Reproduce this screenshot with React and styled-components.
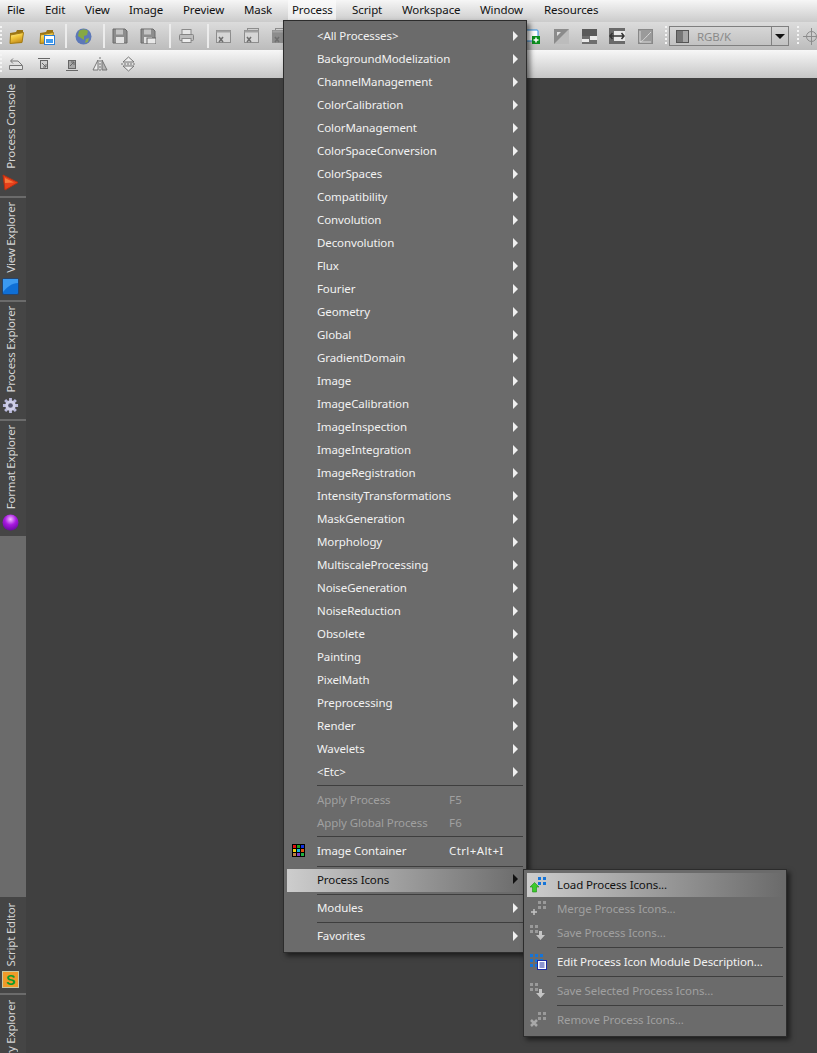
import styled, { createGlobalStyle } from 'styled-components';

const GlobalStyle = createGlobalStyle`
  html, body { margin: 0; height: 100%; overflow: hidden; background: #404040; }
  body { font-family: "Noto Sans", Tahoma, sans-serif; font-size: 11.5px; letter-spacing: -0.1px; }
`;

const Page = styled.div`
  position: relative;
  width: 817px;
  height: 1053px;
  overflow: hidden;
  display: flex;
  flex-direction: column;
`;

const MenuBar = styled.div`
  height: 22px;
  flex: none;
  display: flex;
  align-items: flex-start;
  padding-left: 1px;
  background: linear-gradient(#f6f6f6, #cbcbcb);
`;

const MenuTitle = styled.div`
  width: ${p => p.$width}px;
  box-sizing: border-box;
  height: 20px;
  line-height: 20px;
  padding-left: ${p => (p.$active ? 4 : 6)}px;
  margin-right: ${p => (p.$active ? 10 : 0)}px;
  color: #111;
  background: ${p => (p.$active ? 'linear-gradient(#fafafa, #ececec)' : 'transparent')};
`;

const ToolRow = styled.div`
  height: 28px;
  flex: none;
  display: flex;
  align-items: center;
  background: ${p => (p.$light
    ? 'linear-gradient(#f7f7f7, #c6c6c6)'
    : 'linear-gradient(#dcdcdc, #bcbcbc)')};
`;

const Grip = styled.span`
  width: 2px;
  height: 20px;
  flex: none;
  margin: ${p => p.$margin || '0 4px 0 0'};
  background: repeating-linear-gradient(#f4f4f4 0 2px, transparent 2px 4px);
`;

const ToolDivider = styled.span`
  width: 2px;
  height: 24px;
  flex: none;
  margin: 0 ${p => p.$right ?? 5}px 0 ${p => p.$left ?? 11}px;
  background: #ececec;
`;

const ToolButton = styled.span`
  width: 20px;
  height: 20px;
  flex: none;
  display: flex;
  align-items: center;
  justify-content: center;
  margin-right: ${p => p.$gap ?? 8}px;
`;

const ToolSpacer = styled.span`
  flex: 1;
`;

const Combo = styled.div`
  width: 118px;
  height: 18px;
  flex: none;
  display: flex;
  align-items: center;
  border: 1px solid #7f7f7f;
  color: #8a8a8a;
`;

const ComboSwatch = styled.span`
  width: 11px;
  height: 11px;
  margin: 0 8px 0 6px;
  border: 1px solid #555;
  background: linear-gradient(90deg, #777 50%, #a8a8a8 50%);
`;

const ComboLabel = styled.span`
  flex: 1;
`;

const ComboArrow = styled.span`
  width: 16px;
  height: 100%;
  display: flex;
  align-items: center;
  justify-content: center;
  border-left: 1px solid #7f7f7f;
  &::after {
    content: '';
    border-top: 5px solid #111;
    border-left: 5px solid transparent;
    border-right: 5px solid transparent;
  }
`;

const Body = styled.div`
  flex: 1;
  min-height: 0;
  display: flex;
  background: #404040;
`;

const SideBar = styled.div`
  width: 26px;
  flex: none;
  display: flex;
  flex-direction: column;
  background: #6b6b6b;
`;

const SideGroup = styled.div`
  display: flex;
  flex-direction: column;
  overflow: hidden;
  height: ${p => (p.$height ? `${p.$height}px` : 'auto')};
`;

const SideFill = styled.div`
  flex: 1;
`;

const SideTab = styled.div`
  height: ${p => p.$height}px;
  flex: none;
  box-sizing: border-box;
  display: flex;
  flex-direction: column-reverse;
  justify-content: ${p => (p.$top ? 'flex-end' : 'flex-start')};
  align-items: flex-start;
  padding: ${p => (p.$top ? '5px 0 0 2px' : '0 0 5px 2px')};
  margin-bottom: 2px;
  background: #454545;
`;

const SideLabel = styled.span`
  writing-mode: vertical-rl;
  transform: rotate(180deg);
  white-space: nowrap;
  color: #d4d4d4;
  line-height: 14px;
  letter-spacing: -0.2px;
  margin: 0 0 5px 2px;
`;

const PopupMenu = styled.div`
  position: absolute;
  left: ${p => p.$left}px;
  top: ${p => p.$top}px;
  width: ${p => p.$width}px;
  box-sizing: border-box;
  padding: 3px;
  background: #6b6b6b;
  border: 1px solid #2c2c2c;
  box-shadow: 3px 3px 5px rgba(0, 0, 0, 0.55);
`;

const Item = styled.div`
  height: ${p => p.$height || 23}px;
  box-sizing: border-box;
  padding-bottom: ${p => p.$lift || 0}px;
  display: flex;
  align-items: center;
  position: relative;
  color: ${p => (p.$hot ? '#111' : p.$off ? '#a0a0a0' : '#f2f2f2')};
  background: ${p => (p.$hot ? 'linear-gradient(90deg, #cdcdcd, #6b6b6b)' : 'transparent')};
`;

const ItemIcon = styled.span`
  width: 30px;
  flex: none;
  display: flex;
  justify-content: center;
  padding-right: 8px;
  box-sizing: border-box;
`;

const ItemText = styled.span`
  flex: none;
  width: ${p => p.$width || 132}px;
  white-space: nowrap;
`;

const Shortcut = styled.span`
  white-space: nowrap;
  letter-spacing: 0.4px;
`;

const SubArrow = styled.span`
  position: absolute;
  right: 5px;
  top: 50%;
  margin-top: ${p => -5 - (p.$lift || 0) / 2}px;
  border-left: 5px solid ${p => (p.$hot ? '#111' : '#f0f0f0')};
  border-top: 5px solid transparent;
  border-bottom: 5px solid transparent;
`;

const Separator = styled.div`
  height: 1px;
  margin: ${p => p.$space}px 0 ${p => p.$after}px 30px;
  background: #3e3e3e;
`;

const titlesBefore = [
  ['File', 38], ['Edit', 40], ['View', 44], ['Image', 54], ['Preview', 61], ['Mask', 50],
];
const titlesAfter = [
  ['Script', 50], ['Workspace', 78], ['Window', 64], ['Resources', 70],
];

const processGroups = [
  '<All Processes>', 'BackgroundModelization', 'ChannelManagement', 'ColorCalibration',
  'ColorManagement', 'ColorSpaceConversion', 'ColorSpaces', 'Compatibility', 'Convolution',
  'Deconvolution', 'Flux', 'Fourier', 'Geometry', 'Global', 'GradientDomain', 'Image',
  'ImageCalibration', 'ImageInspection', 'ImageIntegration', 'ImageRegistration',
  'IntensityTransformations', 'MaskGeneration', 'Morphology', 'MultiscaleProcessing',
  'NoiseGeneration', 'NoiseReduction', 'Obsolete', 'Painting', 'PixelMath', 'Preprocessing',
  'Render', 'Wavelets', '<Etc>',
];

function Folder({ badge, id }) {
  return (
    <svg width="17" height="17" viewBox="0 0 17 17">
      <defs>
        <linearGradient id={id} x1="0" y1="0" x2="0.400" y2="1">
          <stop offset="0" stopColor="#fff0a8" />
          <stop offset="0.500" stopColor="#f2c83c" />
          <stop offset="1" stopColor="#c8901c" />
        </linearGradient>
      </defs>
      <path d="M2 5 L2 15 L13 15 L15 7 L15 2 L9 2 L8 4 Z" fill="#9a7414" />
      <path d="M2.500 7 L15.500 4.500 L14 14.500 L2 15.500 Z" fill={`url(#${id})`} stroke="#a37c14" />
      {badge && <rect x="6.500" y="7.500" width="10" height="9" fill="#fff" stroke="#2a7fd8" />}
      {badge && <rect x="8" y="11" width="7" height="4" fill="#3f9cf0" />}
    </svg>
  );
}

function Globe() {
  return (
    <svg width="17" height="17" viewBox="0 0 17 17">
      <circle cx="8.500" cy="8.500" r="8" fill="#5c78b8" />
      <path d="M4 3 C7 1 11 1 13 3 L12 7 L9 8 L9 12 L6 10 L3 8 Z" fill="#86a844" />
      <path d="M11 11 L14 10 L13 14 L10 15 Z" fill="#8cab4a" />
    </svg>
  );
}

function Disk({ close }) {
  return (
    <svg width="16" height="16" viewBox="0 0 16 16">
      <path d="M1 1 H13 L15 3 V15 H1 Z" fill="#8d8d8d" stroke="#6a6a6a" />
      <rect x="4" y="1.500" width="7" height="5" fill="#c4c4c4" />
      <rect x="4" y="9" width="8" height="6" fill="#e2e2e2" />
      {close && <rect x="7" y="10" width="9" height="6" fill="#e8e8e8" stroke="#666" />}
    </svg>
  );
}

function Printer() {
  return (
    <svg width="17" height="16" viewBox="0 0 17 16">
      <rect x="4" y="1.500" width="9" height="5" fill="#e6e6e6" stroke="#8a8a8a" />
      <rect x="1.500" y="6.500" width="14" height="6" rx="1" fill="#bdbdbd" stroke="#858585" />
      <rect x="4" y="10.500" width="9" height="4" fill="#eee" stroke="#8a8a8a" />
    </svg>
  );
}

function WindowClose({ dark, stacked }) {
  return (
    <svg width="16" height="16" viewBox="0 0 16 16">
      {stacked && <rect x="3.500" y="0.500" width="11" height="10" fill="#cfcfcf" stroke="#8d8d8d" />}
      <rect x="0.500" y="2.500" width="14" height="12" fill={dark ? '#8c8c8c' : '#d6d6d6'} stroke="#8d8d8d" />
      <rect x="0.500" y="2.500" width="14" height="2" fill="#a2a2a2" />
      <path d="M3 9 L7 14 M7 9 L3 14" stroke="#6f6f6f" strokeWidth="1.600" />
    </svg>
  );
}

function RotateLeft() {
  return (
    <svg width="14" height="12" viewBox="0 0 14 12" fill="none" stroke="#777">
      <path d="M0.500 7.500 H13.500 V11.500 H0.500 Z" fill="#e4e4e4" />
      <path d="M2 3 H9 L13 7" />
      <path d="M4 0.500 L1.500 3 L4 5.500" />
    </svg>
  );
}

function ArrowBox({ flip }) {
  return (
    <svg width="12" height="13" viewBox="0 0 12 13" fill="none" stroke="#666">
      <rect x="2.500" y="2.500" width="7" height="8" fill={flip ? '#a8a8a8' : '#d0d0d0'} />
      <path d={flip ? 'M0 12.500 H12 M4 8 L8 4 M5 4 H8 V7' : 'M0 0.500 H12 M4 5 L8 9 M5 9 H8 V6'} />
    </svg>
  );
}

function MirrorH() {
  return (
    <svg width="16" height="15" viewBox="0 0 16 15" fill="none" stroke="#757575">
      <path d="M8 0 V15" strokeDasharray="2 1" />
      <path d="M6 3 V13 H1 Z" fill="#eee" />
      <path d="M10 3 V13 H15 Z" fill="#b4b4b4" />
    </svg>
  );
}

function MirrorV() {
  return (
    <svg width="15" height="16" viewBox="0 0 15 16" fill="none" stroke="#757575">
      <path d="M0 8 H15" strokeDasharray="2 1" />
      <path d="M2 6 H13 L7.500 1 Z" fill="#eee" />
      <path d="M2 10 H13 L7.500 15 Z" fill="#eee" />
    </svg>
  );
}

function PlusFile() {
  return (
    <svg width="16" height="16" viewBox="0 0 16 16">
      <rect x="1" y="2" width="12" height="11" rx="1" fill="#fff" stroke="#2a8ce0" />
      <rect x="7" y="8" width="8" height="8" fill="#0b8f1e" />
      <path d="M11 9.500 V14.500 M8.500 12 H13.500" stroke="#fff" strokeWidth="1.500" />
    </svg>
  );
}

function HalfSquare() {
  return (
    <svg width="15" height="15" viewBox="0 0 15 15">
      <rect width="15" height="15" fill="#8b8b8b" />
      <path d="M15 0 V15 H0 Z" fill="#bcbcbc" />
      <path d="M3 3 H7 L3 7 Z" fill="#e0e0e0" />
    </svg>
  );
}

function SplitSquare() {
  return (
    <svg width="15" height="15" viewBox="0 0 15 15">
      <rect width="15" height="7" fill="#5a5a5a" />
      <rect y="7" width="15" height="8" fill="#6e6e6e" />
      <rect x="8" y="7" width="7" height="4" fill="#eaeaea" />
      <rect y="10" width="7" height="3" fill="#eaeaea" />
    </svg>
  );
}

function FitWidth() {
  return (
    <svg width="16" height="16" viewBox="0 0 16 16">
      <rect width="16" height="16" fill="#6a6a6a" />
      <rect x="5" y="3" width="11" height="10" fill="#e8e8e8" />
      <path d="M1 8 H15 M3.500 5 L1 8 L3.500 11 M12.500 5 L15 8 L12.500 11" stroke="#333" strokeWidth="1.500" fill="none" />
    </svg>
  );
}

function Curve() {
  return (
    <svg width="15" height="15" viewBox="0 0 15 15">
      <rect x="0.500" y="0.500" width="14" height="14" fill="#9a9a9a" stroke="#888" />
      <path d="M2 13 C5 12 8 8 13 3 M2 2 V13 H13" stroke="#d8d8d8" fill="none" />
    </svg>
  );
}

function Crosshair() {
  return (
    <svg width="17" height="17" viewBox="0 0 17 17" fill="none" stroke="#8c8c8c">
      <circle cx="8.500" cy="8.500" r="5" />
      <path d="M8.500 0 V17 M0 8.500 H17" />
    </svg>
  );
}

function Triangle() {
  return (
    <svg width="17" height="17" viewBox="0 0 17 17">
      <path d="M1 1 L16 8.500 L3 16 Z" fill="#e8401c" stroke="#b8300f" />
      <path d="M3 4 L12 8.500 L3 9 Z" fill="#f77a3c" />
    </svg>
  );
}

function BlueSquare() {
  return (
    <svg width="17" height="17" viewBox="0 0 17 17">
      <rect x="0.500" y="0.500" width="16" height="16" rx="1.500" fill="#0f6fd6" stroke="#26456e" />
      <path d="M1 1 H16 V5 C10 5 5 9 1 14 Z" fill="#3b9af0" />
    </svg>
  );
}

function Gear() {
  return (
    <svg width="17" height="17" viewBox="0 0 18 18">
      <g stroke="#b9b9dc" strokeWidth="3">
        <path d="M9 1 V17 M1 9 H17 M3.300 3.300 L14.700 14.700 M14.700 3.300 L3.300 14.700" />
      </g>
      <circle cx="9" cy="9" r="5.500" fill="#cfcfe8" />
      <circle cx="9" cy="9" r="2.500" fill="#55556e" />
    </svg>
  );
}

function PurpleBall() {
  return (
    <svg width="17" height="17" viewBox="0 0 17 17">
      <defs>
        <radialGradient id="ball" cx="50%" cy="30%" r="70%">
          <stop offset="0" stopColor="#f0b8ff" />
          <stop offset="0.5" stopColor="#a818e0" />
          <stop offset="1" stopColor="#6a0aa0" />
        </radialGradient>
      </defs>
      <circle cx="8.500" cy="8.500" r="8" fill="url(#ball)" />
    </svg>
  );
}

const ScriptBadge = styled.span`
  width: 17px;
  height: 17px;
  display: flex;
  align-items: center;
  justify-content: center;
  background: #f09a28;
  border: 1px solid #c8c8a0;
  box-sizing: border-box;
  color: #0b9a2c;
  font: bold 14px "Liberation Sans", sans-serif;
`;

function ColorGrid() {
  const colors = ['#e01010', '#20a020', '#1030e0', '#e8d010', '#10b8e0', '#e05010', '#c08040', '#8040c0', '#20b040'];
  return (
    <svg width="13" height="13" viewBox="0 0 13 13">
      <rect width="13" height="13" fill="#000" />
      {colors.map((c, i) => (
        <rect key={c} x={(i % 3) * 4 + 1} y={Math.floor(i / 3) * 4 + 1} width="3" height="3" fill={c} />
      ))}
    </svg>
  );
}

function IconDots({ color, x, y, cols = 2, rows = 2 }) {
  const dots = [];
  for (let r = 0; r < rows; r++) {
    for (let c = 0; c < cols; c++) {
      dots.push(<rect key={`${r}-${c}`} x={x + c * 5} y={y + r * 5} width="3" height="3" fill={color} />);
    }
  }
  return <>{dots}</>;
}

function LoadIcon() {
  return (
    <svg width="17" height="17" viewBox="0 0 17 17">
      <IconDots color="#1574d8" x={8} y={1} />
      <path d="M4.500 6.500 L9 11 H6.500 V16 H2.500 V11 H0 Z" fill="#3ecb2c" stroke="#1c8a18" strokeWidth="0.600" />
    </svg>
  );
}

function MergeIcon() {
  return (
    <svg width="17" height="17" viewBox="0 0 17 17">
      <IconDots color="#9a9a9a" x={8} y={1} />
      <path d="M4 9 V15 M1 12 H7" stroke="#c4c4c4" strokeWidth="1.500" />
    </svg>
  );
}

function SaveIcon() {
  return (
    <svg width="17" height="17" viewBox="0 0 17 17">
      <IconDots color="#9a9a9a" x={0} y={1} />
      <path d="M9 7 H12 V11 H15 L10.500 16 L6 11 H9 Z" fill="#c4c4c4" />
    </svg>
  );
}

function EditIcon() {
  return (
    <svg width="17" height="17" viewBox="0 0 17 17">
      <IconDots color="#1574d8" x={0} y={1} cols={3} rows={3} />
      <rect x="7.500" y="7.500" width="9" height="9" fill="#fff" stroke="#1a2aa0" />
      <path d="M9.500 10 H14.500 M9.500 12 H14.500 M9.500 14 H14.500" stroke="#1a2aa0" />
    </svg>
  );
}

function RemoveIcon() {
  return (
    <svg width="17" height="17" viewBox="0 0 17 17">
      <IconDots color="#9a9a9a" x={8} y={1} />
      <path d="M1 9 L7 15 M7 9 L1 15" stroke="#a8a8a8" strokeWidth="2.500" />
    </svg>
  );
}

export default function App() {
  return (
    <Page>
      <GlobalStyle />
      <MenuBar>
        {titlesBefore.map(([name, width]) => (
          <MenuTitle key={name} $width={width}>{name}</MenuTitle>
        ))}
        <MenuTitle $active $width={48}>Process</MenuTitle>
        {titlesAfter.map(([name, width]) => (
          <MenuTitle key={name} $width={width}>{name}</MenuTitle>
        ))}
      </MenuBar>

      <ToolRow>
        <Grip />
        <ToolButton $gap={10}><Folder id="folderA" /></ToolButton>
        <ToolButton $gap={0}><Folder id="folderB" badge /></ToolButton>
        <ToolDivider $left={9} $right={6} />
        <ToolButton $gap={0}><Globe /></ToolButton>
        <ToolDivider $left={10} />
        <ToolButton><Disk /></ToolButton>
        <ToolButton $gap={0}><Disk close /></ToolButton>
        <ToolDivider />
        <ToolButton $gap={0}><Printer /></ToolButton>
        <ToolDivider />
        <ToolButton><WindowClose /></ToolButton>
        <ToolButton><WindowClose stacked /></ToolButton>
        <ToolButton><WindowClose dark stacked /></ToolButton>
        <ToolSpacer />
        <ToolButton><PlusFile /></ToolButton>
        <ToolButton><HalfSquare /></ToolButton>
        <ToolButton><SplitSquare /></ToolButton>
        <ToolButton><FitWidth /></ToolButton>
        <ToolButton $gap={0}><Curve /></ToolButton>
        <Grip $margin="0 2px 0 10px" />
        <Combo>
          <ComboSwatch />
          <ComboLabel>RGB/K</ComboLabel>
          <ComboArrow />
        </Combo>
        <Grip $margin="0 2px 0 8px" />
        <ToolButton $gap={-4}><Crosshair /></ToolButton>
      </ToolRow>

      <ToolRow $light>
        <Grip />
        <ToolButton><RotateLeft /></ToolButton>
        <ToolButton><ArrowBox /></ToolButton>
        <ToolButton><ArrowBox flip /></ToolButton>
        <ToolButton><MirrorH /></ToolButton>
        <ToolButton><MirrorV /></ToolButton>
      </ToolRow>

      <Body>
        <SideBar>
          <SideGroup>
            <SideTab $height={118}><Triangle /><SideLabel>Process Console</SideLabel></SideTab>
            <SideTab $height={102}><BlueSquare /><SideLabel>View Explorer</SideLabel></SideTab>
            <SideTab $height={117}><Gear /><SideLabel>Process Explorer</SideLabel></SideTab>
            <SideTab $height={115}><PurpleBall /><SideLabel>Format Explorer</SideLabel></SideTab>
          </SideGroup>
          <SideFill />
          <SideGroup $height={156}>
            <SideTab $height={96}><ScriptBadge>S</ScriptBadge><SideLabel>Script Editor</SideLabel></SideTab>
            <SideTab $height={130} $top><SideLabel>History Explorer</SideLabel></SideTab>
          </SideGroup>
        </SideBar>
      </Body>

      <PopupMenu $left={283} $top={20} $width={244}>
        {processGroups.map(name => (
          <Item key={name}>
            <ItemIcon />
            <ItemText>{name}</ItemText>
            <SubArrow />
          </Item>
        ))}
        <Separator $space={2} $after={3} />
        <Item $off $lift={2}><ItemIcon /><ItemText>Apply Process</ItemText><Shortcut>F5</Shortcut></Item>
        <Item $off $lift={2}><ItemIcon /><ItemText>Apply Global Process</ItemText><Shortcut>F6</Shortcut></Item>
        <Separator $space={1} $after={1} />
        <Item $height={27} $lift={2}><ItemIcon><ColorGrid /></ItemIcon><ItemText>Image Container</ItemText><Shortcut>Ctrl+Alt+I</Shortcut></Item>
        <Separator $space={1} $after={2} />
        <Item $hot $lift={2}><ItemIcon /><ItemText>Process Icons</ItemText><SubArrow $hot $lift={4} /></Item>
        <Separator $space={2} $after={3} />
        <Item $lift={4}><ItemIcon /><ItemText>Modules</ItemText><SubArrow $lift={4} /></Item>
        <Separator $space={1} $after={3} />
        <Item $lift={4}><ItemIcon /><ItemText>Favorites</ItemText><SubArrow $lift={4} /></Item>
      </PopupMenu>

      <PopupMenu $left={523} $top={869} $width={264}>
        <Item $hot $height={24} $lift={2}><ItemIcon><LoadIcon /></ItemIcon><ItemText $width={220}>Load Process Icons...</ItemText></Item>
        <Item $off $height={24} $lift={2}><ItemIcon><MergeIcon /></ItemIcon><ItemText $width={220}>Merge Process Icons...</ItemText></Item>
        <Item $off $height={24} $lift={2}><ItemIcon><SaveIcon /></ItemIcon><ItemText $width={220}>Save Process Icons...</ItemText></Item>
        <Separator $space={2} $after={2} />
        <Item $height={25} $lift={2}><ItemIcon><EditIcon /></ItemIcon><ItemText $width={220}>Edit Process Icon Module Description...</ItemText></Item>
        <Separator $space={1} $after={2} />
        <Item $off $height={25} $lift={2}><ItemIcon><SaveIcon /></ItemIcon><ItemText $width={220}>Save Selected Process Icons...</ItemText></Item>
        <Separator $space={1} $after={2} />
        <Item $off $height={25} $lift={2}><ItemIcon><RemoveIcon /></ItemIcon><ItemText $width={220}>Remove Process Icons...</ItemText></Item>
      </PopupMenu>
    </Page>
  );
}
